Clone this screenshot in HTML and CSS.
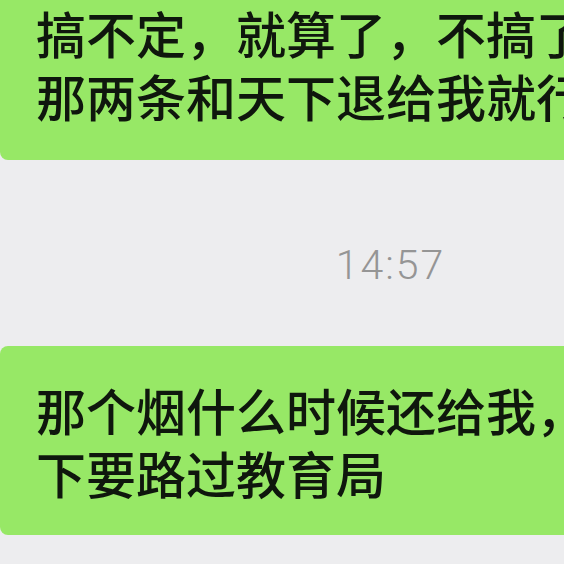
FILE: index.html
```html
<!DOCTYPE html>
<html lang="zh-CN">
<head>
<meta charset="utf-8">
<link rel="stylesheet" href="styles.css">
</head>
<body>
<div class="screen">
  <div class="bubble bubble-first">搞不定，就算了，不搞了，<br>那两条和天下退给我就行了</div>
  <div class="time">14:57</div>
  <div class="bubble">那个烟什么时候还给我，我等<br>下要路过教育局</div>
</div>
</body>
</html>
```

FILE: styles.css
```css
html, body {
  margin: 0;
  padding: 0;
  overflow: hidden;
  background: #ededef;
}

.screen {
  width: 781px;
  display: flex;
  flex-direction: column;
  align-items: flex-start;
}

.bubble {
  background: #97e866;
  color: #0f170d;
  font-family: "Noto Sans CJK SC", "Noto Sans", sans-serif;
  font-weight: 500;
  font-size: 50px;
  line-height: 63px;
  white-space: nowrap;
  padding: 32px 60px 31px 36px;
  border-radius: 8px;
}

.bubble-first {
  padding-top: 1px;
  padding-bottom: 33px;
  border-top-left-radius: 0;
}

.time {
  align-self: stretch;
  text-align: center;
  font-family: "Roboto", "Liberation Sans", sans-serif;
  font-weight: 300;
  font-size: 41px;
  line-height: 41px;
  letter-spacing: 2px;
  color: #959595;
  margin: 85px 0 60px;
}
```
